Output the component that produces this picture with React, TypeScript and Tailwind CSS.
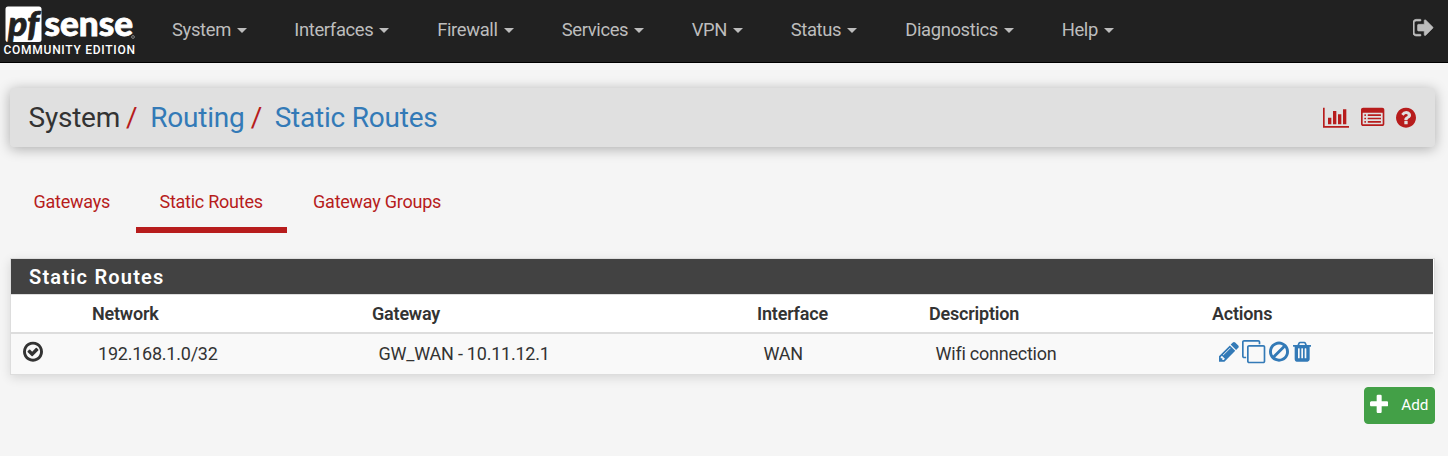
import type { ReactNode } from "react";

const disc =
  "M1664 896q0 209-103 385.5t-279.5 279.5-385.5 103-385.5-103-279.5-279.5-103-385.5 103-385.5 279.5-279.5 385.5-103 385.5 103 279.5 279.5 103 385.5z";

const icons = {
  signOut:
    "M704 1440q0 4 1 20t.5 26.5-3 23.5-10 19.5-20.5 6.5h-320q-119 0-203.5-84.5t-84.5-203.5v-704q0-119 84.5-203.5t203.5-84.5h320q13 0 22.5 9.5t9.5 22.5q0 4 1 20t.5 26.5-3 23.5-10 19.5-20.5 6.5h-320q-66 0-113 47t-47 113v704q0 66 47 113t113 47h312l11.5 1 11.5 3 8 5.5 7 9 2 13.5zm928-544q0 26-19 45l-544 544q-19 19-45 19t-45-19-19-45v-288h-448q-26 0-45-19t-19-45v-384q0-26 19-45t45-19h448v-288q0-26 19-45t45-19 45 19l544 544q19 19 19 45z",
  question:
    "M1024 1376v-192q0-14-9-23t-23-9h-192q-14 0-23 9t-9 23v192q0 14 9 23t23 9h192q14 0 23-9t9-23zm256-672q0-88-55.5-163t-138.5-116-170-41q-243 0-371 213-15 24 8 42l132 100q7 6 19 6 16 0 25-12 53-68 86-92 34-24 86-24 48 0 85.5 26t37.5 59q0 38-20 61t-68 45q-63 28-115.5 86.5t-52.5 125.5v36q0 14 9 23t23 9h192q14 0 23-9t9-23q0-19 21.5-49.5t54.5-49.5q32-18 49-28.5t46-35 44.5-48 28-60.5 12.5-81z" + disc,
  check:
    "M1299 813l-422 422q-19 19-45 19t-45-19l-294-294q-19-19-19-45t19-45l102-102q19-19 45-19t45 19l147 147 275-275q19-19 45-19t45 19l102 102q19 19 19 45t-19 45zM1440 896q0-148-73-273t-198-198-273-73-273 73-198 198-73 273 73 273 198 198 273 73 273-73 198-198 73-273z" + disc,
  chart:
    "M640 896v512h-256v-512h256zm384-512v1024h-256v-1024h256zm1024 1152v128h-2048v-1536h128v1408h1920zm-640-896v768h-256v-768h256zm384-384v1152h-256v-1152h256z",
  list:
    "M256 1184q0-32 32-32h64q32 0 32 32v64q0 32-32 32h-64q-32 0-32-32zM256 928q0-32 32-32h64q32 0 32 32v64q0 32-32 32h-64q-32 0-32-32zM256 672q0-32 32-32h64q32 0 32 32v64q0 32-32 32h-64q-32 0-32-32zM512 1184q0-32 32-32h960q32 0 32 32v64q0 32-32 32h-960q-32 0-32-32zM512 928q0-32 32-32h960q32 0 32 32v64q0 32-32 32h-960q-32 0-32-32zM512 672q0-32 32-32h960q32 0 32 32v64q0 32-32 32h-960q-32 0-32-32zM1664 1376v-832q0-13-9.500-22.500t-22.500-9.500h-1472q-13 0-22.500 9.500t-9.500 22.500v832q0 13 9.500 22.500t22.500 9.500h1472q13 0 22.500-9.500t9.500-22.500zM1792 288v1088q0 66-47 113t-113 47h-1472q-66 0-113-47t-47-113v-1088q0-66 47-113t113-47h1472q66 0 113 47t47 113z",
  pencil:
    "M491 1536l91-91-235-235-91 91v107h128v128h107zm523-928q0-22-22-22-10 0-17 7l-542 542q-7 7-7 17 0 22 22 22 10 0 17-7l542-542q7-7 7-17zm-54-192l416 416-832 832h-416v-416zm683 96q0 53-37 90l-166 166-416-416 166-165q36-38 90-38 53 0 91 38l235 234q37 39 37 91z",
  clone:
    "M1664 1632v-1088q0-13-9.5-22.5t-22.5-9.5h-1088q-13 0-22.5 9.5t-9.5 22.5v1088q0 13 9.5 22.5t22.5 9.5h1088q13 0 22.5-9.5t9.5-22.5zm128-1088v1088q0 66-47 113t-113 47h-1088q-66 0-113-47t-47-113v-1088q0-66 47-113t113-47h1088q66 0 113 47t47 113zm-384-384v160h-128v-160q0-13-9.5-22.5t-22.5-9.5h-1088q-13 0-22.5 9.5t-9.5 22.5v1088q0 13 9.5 22.5t22.5 9.5h160v128h-160q-66 0-113-47t-47-113v-1088q0-66 47-113t113-47h1088q66 0 113 47t47 113z",
  ban:
    "M1440 893q0-161-87-295l-754 753q137 89 297 89 111 0 211.5-43.5t173.5-116.5 116-174.5 43-212.5zm-999 299l755-754q-135-91-300-91-148 0-273 73t-198 199-73 274q0 162 89 299zm1223-299q0 157-61 300t-163.5 246-245 164-298.5 61-298.5-61-245-164-163.5-246-61-300 61-299.5 163.5-245.5 245-164 298.5-61 298.5 61 245 164 163.5 245.5 61 299.5z",
  trash:
    "M704 1376v-704q0-14-9-23t-23-9h-64q-14 0-23 9t-9 23v704q0 14 9 23t23 9h64q14 0 23-9t9-23zm256 0v-704q0-14-9-23t-23-9h-64q-14 0-23 9t-9 23v704q0 14 9 23t23 9h64q14 0 23-9t9-23zm256 0v-704q0-14-9-23t-23-9h-64q-14 0-23 9t-9 23v704q0 14 9 23t23 9h64q14 0 23-9t9-23zm-544-992h448l-48-117q-7-9-17-11h-317q-10 2-17 11zm928 32v64q0 14-9 23t-23 9h-96v948q0 83-47 143.500t-113 60.500h-832q-66 0-113-58.500t-47-141.500v-952h-96q-14 0-23-9t-9-23v-64q0-14 9-23t23-9h309l70-167q15-37 54-63t79-26h320q40 0 79 26t54 63l70 167h309q14 0 23 9t9 23z",
  plus:
    "M1600 736v192q0 40-28 68t-68 28h-416v416q0 40-28 68t-68 28h-192q-40 0-68-28t-28-68v-416h-416q-40 0-68-28t-28-68v-192q0-40 28-68t68-28h416v-416q0-40 28-68t68-28h192q40 0 68 28t28 68v416h416q40 0 68 28t28 68z",
};

function Icon({ name, box = "128 0 1536 1792", className = "w-5" }: { name: keyof typeof icons; box?: string; className?: string }) {
  return (
    <svg viewBox={box} className={`h-[23.33px] shrink-0 ${className}`} fill="currentColor" fillRule="evenodd" aria-hidden="true">
      <path d={icons[name]} />
    </svg>
  );
}

function Logo() {
  return (
    <svg width="140" height="62" viewBox="0 0 140 62" className="block shrink-0" fill="#fff">
      <path d="M8 6.500h31q2.500 0 2.500 2.500v30.500q0 2.500-2.500 2.500H8q-2.500 0-2.500-2.500V9q0-2.500 2.500-2.500z" />
      <text x="8" y="35.500" fontFamily="Lato" fontWeight="900" fontStyle="italic" fontSize="34.500" fill="#212121" stroke="#212121" strokeWidth=".7" textLength="31" lengthAdjust="spacingAndGlyphs">pf</text>
      <text x="44.500" y="35.700" fontFamily="Lato" fontWeight="900" fontSize="34" stroke="#fff" strokeWidth=".8" textLength="88.500" lengthAdjust="spacingAndGlyphs">sense</text>
      <circle cx="133" cy="37" r="1.400" fill="none" stroke="#aaa" strokeWidth=".7" />
      <text x="3.500" y="54" fontFamily="Roboto" fontWeight="500" fontSize="12" textLength="131.500" lengthAdjust="spacing">COMMUNITY EDITION</text>
    </svg>
  );
}

const menu = [
  { label: "System", width: "w-[122.3px]" },
  { label: "Interfaces", width: "w-[142.9px]" },
  { label: "Firewall", width: "w-[124.5px]" },
  { label: "Services", width: "w-[130px]" },
  { label: "VPN", width: "w-[99px]" },
  { label: "Status", width: "w-[114.5px]" },
  { label: "Diagnostics", width: "w-[156.5px]" },
  { label: "Help", width: "w-[100px]" },
];

function Cell({ children, className = "" }: { children?: ReactNode; className?: string }) {
  return <div className={`flex items-center ${className}`}>{children}</div>;
}

export default function App() {
  return (
    <div className="min-h-[456px] bg-[#f5f5f5] font-[Roboto,sans-serif] text-[18px] leading-none text-[#333]">
      <header className="flex h-[63px] border-b border-black bg-[#212121] text-[#bdbdbd]">
        <Logo />
        <nav className="ml-8 flex h-[60px] items-center text-[18.4px] tracking-[-0.35px]">
          {menu.map((m) => (
            <a key={m.label} className={`flex items-center ${m.width}`}>
              {m.label}
              <span className="ml-[6px] h-0 w-0 border-x-[5px] border-t-[5px] border-x-transparent border-t-current" />
            </a>
          ))}
        </nav>
        <a className="mt-4 mr-[14.500px] ml-auto">
          <Icon name="signOut" box="96 0 1568 1792" className="w-[20.42px] stroke-current stroke-[50]" />
        </a>
      </header>

      <div className="mt-[25px] mr-[13px] ml-[10px] flex h-[59px] items-center rounded bg-[#e0e0e0] pr-[19px] pl-[18.500px] shadow-[0_2px_13px_rgba(0,0,0,0.3)]">
        <h1 className="flex items-center text-[28px] tracking-[-0.22px]">
          <span className="w-[97.500px]">System</span>
          <span className="w-[24.200px] text-[#b71c1c]">/</span>
          <a className="w-[100.500px] text-[#337ab7]">Routing</a>
          <span className="w-[24px] text-[#b71c1c]">/</span>
          <a className="text-[#337ab7]">Static Routes</a>
        </h1>
        <div className="ml-auto flex items-center text-[#b71c1c]">
          <Icon name="chart" box="0 0 2048 1792" className="w-[26.67px]" />
          <Icon name="list" box="0 0 1792 1792" className="ml-3 w-[23.33px]" />
          <Icon name="question" className="ml-[11.500px] w-5" />
        </div>
      </div>

      <div className="mt-[22px] ml-[10px] flex h-16 gap-[2.67px] tracking-[-0.25px] text-[#b71c1c]">
        <a className="flex w-[123.3px] items-center border-b-6 border-transparent pt-2 pl-[23.5px]">Gateways</a>
        <a className="flex w-[151px] items-center border-b-6 border-[#b71c1c] pt-2 pl-[23.5px]">Static Routes</a>
        <a className="flex items-center border-b-6 border-transparent pt-2 pl-[23.5px]">Gateway Groups</a>
      </div>

      <section className="mt-[25px] mr-[13px] ml-[10px] h-[117px] border border-[#ddd] bg-white pr-px shadow-[0_3px_10px_rgba(0,0,0,0.12)]">
        <h2 className="flex h-[35px] items-center bg-[#424242] pl-[18px] text-[20px] font-semibold tracking-[1.2px] text-white">Static Routes</h2>
        <div className="flex h-[40px] items-center border-t border-b-2 border-[#ddd] pl-[81px] font-semibold tracking-[-0.2px]">
          <Cell className="w-[280px]">Network</Cell>
          <Cell className="w-[385px]">Gateway</Cell>
          <Cell className="w-[172px]">Interface</Cell>
          <Cell className="w-[283px]">Description</Cell>
          <Cell>Actions</Cell>
        </div>
        <div className="flex h-10 items-center bg-[#f9f9f9] pl-3 tracking-[-0.23px]">
          <Cell className="w-[75px] pb-1"><Icon name="check" /></Cell>
          <Cell className="w-[280.500px]">192.168.1.0/32</Cell>
          <Cell className="w-[385px]">GW_WAN - 10.11.12.1</Cell>
          <Cell className="w-[172px]">WAN</Cell>
          <Cell className="w-[283px]">Wifi connection</Cell>
          <Cell className="gap-[3.700px] pb-1 text-[#337ab7]">
            <Icon name="pencil" />
            <Icon name="clone" box="0 0 1792 1792" className="w-[23.33px]" />
            <Icon name="ban" />
            <Icon name="trash" box="192 0 1408 1792" className="w-[18.33px]" />
          </Cell>
        </div>
      </section>

      <div className="mt-3 mr-[13px] flex justify-end">
        <button className="flex h-[37px] w-[71px] items-center rounded-[4px] border border-[#43a047] bg-[#43a047] pl-[5px] text-[15.3px] tracking-[-0.1px] text-white">
          <Icon name="plus" box="192 0 1408 1792" className="mb-[2px] w-[18.33px]" />
          <span className="ml-[13px]">Add</span>
        </button>
      </div>
    </div>
  );
}
